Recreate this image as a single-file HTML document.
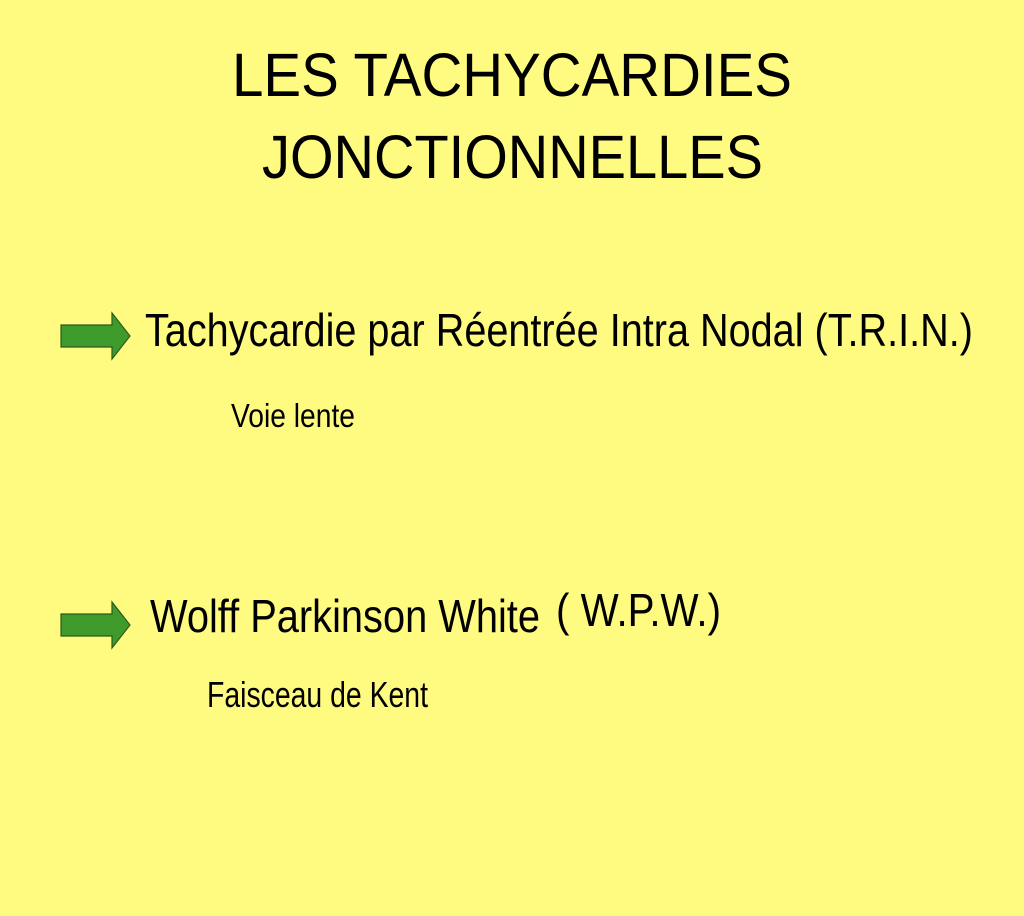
<!DOCTYPE html>
<html><head><meta charset="utf-8"><style>
html,body{margin:0;padding:0;background:#fffb80;}
svg{display:block}
</style></head><body>
<svg width="1024" height="916" viewBox="0 0 1024 916" xmlns="http://www.w3.org/2000/svg">
<rect width="1024" height="916" fill="#fffb80"/>
<g font-family="Liberation Sans, Arial, sans-serif" fill="#000">
<text x="232" y="96" font-size="61" textLength="560" lengthAdjust="spacingAndGlyphs">LES TACHYCARDIES</text>
<text x="262" y="178" font-size="61" textLength="501" lengthAdjust="spacingAndGlyphs">JONCTIONNELLES</text>
<text x="145" y="346" font-size="46" textLength="828" lengthAdjust="spacingAndGlyphs">Tachycardie par Réentrée Intra Nodal (T.R.I.N.)</text>
<text x="231" y="427" font-size="33" textLength="124" lengthAdjust="spacingAndGlyphs">Voie lente</text>
<text x="150" y="632" font-size="46" textLength="390" lengthAdjust="spacingAndGlyphs">Wolff Parkinson White</text>
<text x="556" y="626" font-size="46" textLength="165" lengthAdjust="spacingAndGlyphs">( W.P.W.)</text>
<text x="207" y="707" font-size="36" textLength="221" lengthAdjust="spacingAndGlyphs">Faisceau de Kent</text>
</g>
<g fill="#3f9a2c" stroke="#2a5a1a" stroke-width="1.2">
<path d="M61 325 H112 V313 L130 336 L112 359 V347 H61 Z"/>
<path d="M61 614 H112 V602 L130 625 L112 648 V636 H61 Z"/>
</g>
</svg>
</body></html>
